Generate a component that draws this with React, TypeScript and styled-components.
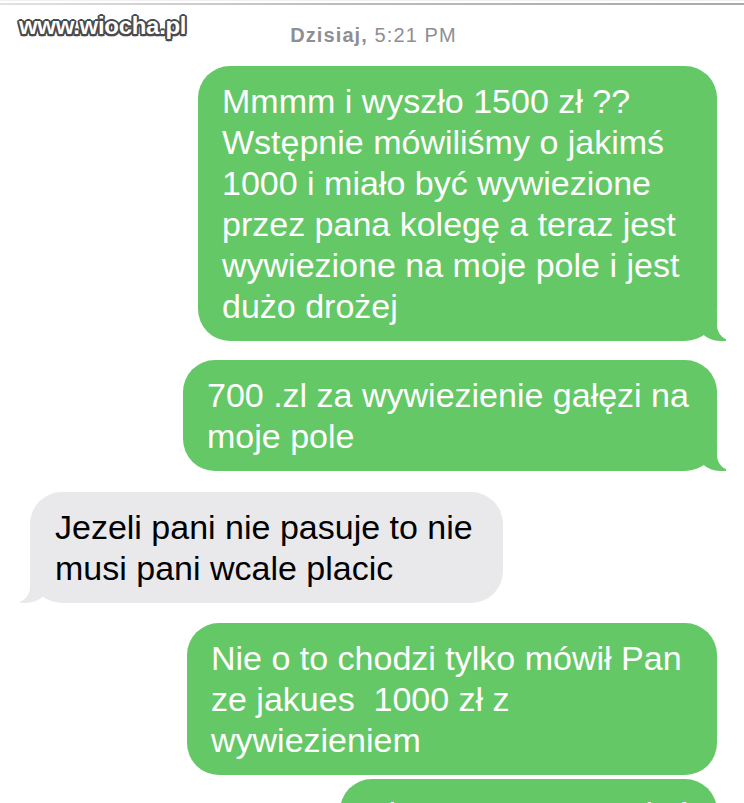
import React from 'react';
import styled, { createGlobalStyle, css } from 'styled-components';

const GlobalStyle = createGlobalStyle`
  html, body {
    margin: 0;
    padding: 0;
    background: #ffffff;
    overflow: hidden;
  }
`;

type Side = 'me' | 'them';

type MessageData = {
  side: Side;
  width: number;
  gap: number;
  tail: boolean;
  lines: string[];
};

const messages: MessageData[] = [
  {
    side: 'me',
    width: 519,
    gap: 0,
    tail: true,
    lines: [
      'Mmmm i wyszło 1500 zł ??',
      'Wstępnie mówiliśmy o jakimś',
      '1000 i miało być wywiezione',
      'przez pana kolegę a teraz jest',
      'wywiezione na moje pole i jest',
      'dużo drożej',
    ],
  },
  {
    side: 'me',
    width: 534,
    gap: 19,
    tail: true,
    lines: ['700 .zl za wywiezienie gałęzi na', 'moje pole'],
  },
  {
    side: 'them',
    width: 473,
    gap: 21,
    tail: true,
    lines: ['Jezeli pani nie pasuje to nie', 'musi pani wcale placic'],
  },
  {
    side: 'me',
    width: 530,
    gap: 20,
    tail: false,
    lines: ['Nie o to chodzi tylko mówił Pan', 'ze jakues  1000 zł z', 'wywiezieniem'],
  },
  {
    side: 'me',
    width: 377,
    gap: 4,
    tail: false,
    lines: ['Nie ma co rozmawiać', 'o tym'],
  },
];

const Screen = styled.div`
  position: relative;
  width: 744px;
  height: 803px;
  overflow: hidden;
  background: #ffffff;
  border-top: 1px solid #f1f1f1;
  box-sizing: border-box;
`;

const TopRule = styled.div`
  height: 2px;
  margin-top: 2px;
  background: linear-gradient(90deg, #e2e2e2 0%, #bdbdbd 45%, #a9a9a9 100%);
`;

const Watermark = styled.div`
  position: absolute;
  left: 19px;
  top: 11px;
  font-family: 'Liberation Sans', Arial, sans-serif;
  font-weight: 700;
  font-size: 24px;
  letter-spacing: -0.3px;
  color: #ffffff;
  text-shadow:
    -1.5px -1.5px 0 #4a4a4a,
    1.5px -1.5px 0 #4a4a4a,
    -1.5px 1.5px 0 #4a4a4a,
    1.5px 1.5px 0 #4a4a4a,
    0 2px 0 #4a4a4a,
    0 -2px 0 #4a4a4a,
    2px 0 0 #4a4a4a,
    -2px 0 0 #4a4a4a,
    0 3px 1px rgba(0, 0, 0, 0.25);
`;

const Thread = styled.div`
  display: flex;
  flex-direction: column;
  padding: 17px 27px 0 30px;
`;

const Stamp = styled.div`
  align-self: center;
  font-family: 'Liberation Sans', Arial, sans-serif;
  font-size: 20px;
  line-height: 26px;
  letter-spacing: 1.1px;
  color: #8e8e93;
  margin-bottom: 18px;

  b {
    font-weight: 700;
  }
`;

const GREEN = '#65c866';
const GREY = '#e9e9eb';

const Bubble = styled.div<{ $side: Side; $width: number; $gap: number; $tail: boolean }>`
  position: relative;
  box-sizing: border-box;
  width: ${(p) => p.$width}px;
  margin-top: ${(p) => p.$gap}px;
  align-self: ${(p) => (p.$side === 'me' ? 'flex-end' : 'flex-start')};
  padding: 15px 22px 14px ${(p) => (p.$side === 'me' ? 24 : 25)}px;
  border-radius: 32px;
  background: ${(p) => (p.$side === 'me' ? GREEN : GREY)};
  color: ${(p) => (p.$side === 'me' ? '#ffffff' : '#000000')};
  font-family: 'Liberation Sans', Arial, sans-serif;
  font-size: 34px;
  line-height: 41px;

  ${(p) =>
    p.$tail &&
    p.$side === 'me' &&
    css`
      &::before {
        content: '';
        position: absolute;
        bottom: 0;
        right: -9px;
        width: 30px;
        height: 30px;
        background: ${GREEN};
        border-bottom-left-radius: 24px 22px;
      }
      &::after {
        content: '';
        position: absolute;
        bottom: 0;
        right: -36px;
        width: 36px;
        height: 30px;
        background: #ffffff;
        border-bottom-left-radius: 16px;
      }
    `}

  ${(p) =>
    p.$tail &&
    p.$side === 'them' &&
    css`
      &::before {
        content: '';
        position: absolute;
        bottom: 0;
        left: -10px;
        width: 30px;
        height: 30px;
        background: ${GREY};
        border-bottom-right-radius: 24px 22px;
      }
      &::after {
        content: '';
        position: absolute;
        bottom: 0;
        left: -36px;
        width: 36px;
        height: 30px;
        background: #ffffff;
        border-bottom-right-radius: 16px;
      }
    `}
`;

const Line = styled.div`
  white-space: pre;
`;

const App = () => {
  return (
    <Screen>
      <GlobalStyle />
      <TopRule />
      <Watermark>www.wiocha.pl</Watermark>
      <Thread>
        <Stamp>
          <b>Dzisiaj,</b> 5:21 PM
        </Stamp>
        {messages.map((m, idx) => (
          <Bubble key={idx} $side={m.side} $width={m.width} $gap={m.gap} $tail={m.tail}>
            {m.lines.map((line, i) => (
              <Line key={i}>{line}</Line>
            ))}
          </Bubble>
        ))}
      </Thread>
    </Screen>
  );
};

export default App;
